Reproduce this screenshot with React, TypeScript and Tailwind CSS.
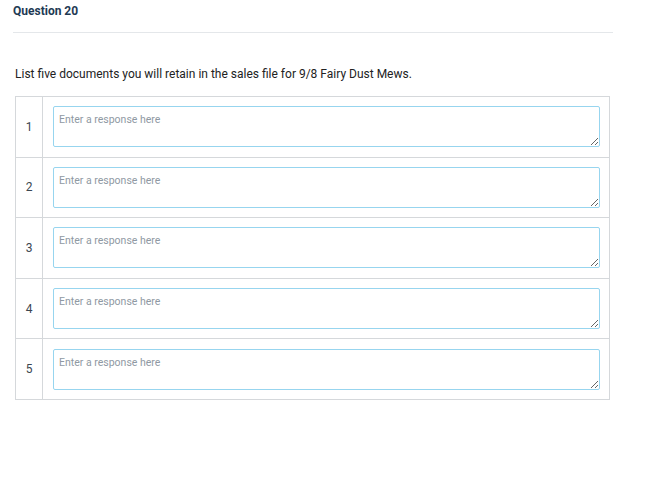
import React from 'react';

const rows = [1, 2, 3, 4, 5];

const App = () => {
  return (
    <div className="min-h-[486px] w-[647px] bg-white font-['Roboto',sans-serif]">
      <div className="w-[600px] pl-[13px] pt-[3px]">
        <h2 className="text-[12px] font-bold leading-[16px] text-[#1e3a54]">Question 20</h2>
        <div className="mt-[13px] h-px w-[600px] bg-[#e4e7ea]" />
      </div>

      <div className="pl-[15px]">
        <p className="mt-[33px] text-[12px] leading-[16px] text-[#222]">
          List five documents you will retain in the sales file for 9/8 Fairy Dust Mews.
        </p>

        {/* Answer rows */}
        <div className="mt-[14px] w-[595px] border-t border-l border-r border-[#d5d8db]">
          {rows.map((n) => (
            <div key={n} className="flex border-b border-[#d5d8db]">
              <div className="flex w-[27px] items-center justify-center border-r border-[#d5d8db] text-[12px] text-[#3b4650]">
                {n}
              </div>
              <div className="flex-1 py-[9.3px] pl-[10px] pr-[9px]">
                <textarea
                  placeholder="Enter a response here"
                  className="block h-[41px] w-full rounded-[2px] border border-[#97d5ef] px-[5px] pt-[6px] pb-[3px] text-[10.5px] leading-[14px] text-[#333] outline-none placeholder:text-[#8f99a3]"
                />
              </div>
            </div>
          ))}
        </div>
      </div>
    </div>
  );
};

export default App;
